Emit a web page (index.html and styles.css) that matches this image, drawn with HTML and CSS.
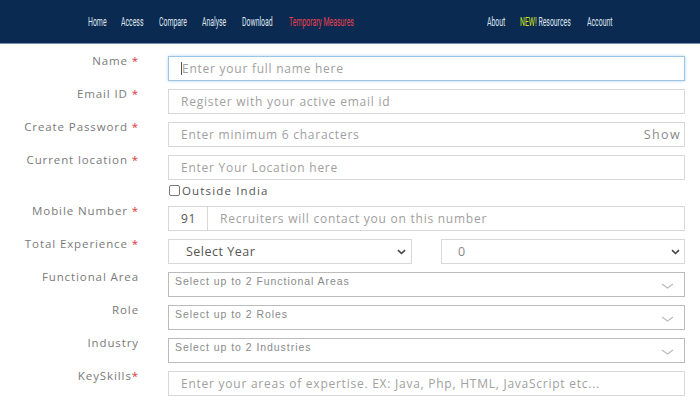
FILE: index.html
```html
<!DOCTYPE html>
<html>
<head>
<meta charset="utf-8">
<link rel="stylesheet" href="styles.css">
</head>
<body>
<header class="topbar">
  <nav class="nav">
    <a class="w-home">Home</a><a class="w-access">Access</a><a class="w-compare">Compare</a><a class="w-analyse">Analyse</a><a class="w-download">Download</a><a class="hot w-temp">Temporary Measures</a><a class="w-about">About</a><a class="w-res"><span class="new">NEW!</span> Resources</a><a>Account</a>
  </nav>
</header>
<main class="form">
  <div class="row">
    <label class="lbl">Name <span class="req">*</span></label>
    <div class="field focus"><span class="caret"></span><span class="ph">Enter your full name here</span></div>
  </div>
  <div class="row">
    <label class="lbl">Email ID <span class="req">*</span></label>
    <div class="field"><span class="ph">Register with your active email id</span></div>
  </div>
  <div class="row">
    <label class="lbl">Create Password <span class="req">*</span></label>
    <div class="field"><span class="ph">Enter minimum 6 characters</span><span class="show">Show</span></div>
  </div>
  <div class="row">
    <label class="lbl">Current location <span class="req">*</span></label>
    <div class="field"><span class="ph">Enter Your Location here</span></div>
  </div>
  <div class="row check-row">
    <span></span>
    <div class="check"><span class="box"></span>Outside India</div>
  </div>
  <div class="row">
    <label class="lbl">Mobile Number <span class="req">*</span></label>
    <div class="mobile"><span class="code">91</span><div class="field grow"><span class="ph">Recruiters will contact you on this number</span></div></div>
  </div>
  <div class="row">
    <label class="lbl">Total Experience <span class="req">*</span></label>
    <div class="exp">
      <div class="field sel year"><span class="val">Select Year</span><svg class="chev" width="9" height="6" viewBox="0 0 9 6"><path d="M1 1.2 L4.5 4.5 L8 1.2" fill="none" stroke="#444" stroke-width="1.6"/></svg></div>
      <div class="field sel month"><span class="val light">0</span><svg class="chev" width="9" height="6" viewBox="0 0 9 6"><path d="M1 1.2 L4.5 4.5 L8 1.2" fill="none" stroke="#444" stroke-width="1.6"/></svg></div>
    </div>
  </div>
  <div class="row">
    <label class="lbl">Functional Area</label>
    <div class="field multi"><span class="mph">Select up to 2 Functional Areas</span><svg class="mchev" width="13" height="6" viewBox="0 0 13 6"><path d="M1 1 L6.5 5 L12 1" fill="none" stroke="#bbb" stroke-width="1.2"/></svg></div>
  </div>
  <div class="row">
    <label class="lbl">Role</label>
    <div class="field multi"><span class="mph">Select up to 2 Roles</span><svg class="mchev" width="13" height="6" viewBox="0 0 13 6"><path d="M1 1 L6.5 5 L12 1" fill="none" stroke="#bbb" stroke-width="1.2"/></svg></div>
  </div>
  <div class="row">
    <label class="lbl">Industry</label>
    <div class="field multi"><span class="mph">Select up to 2 Industries</span><svg class="mchev" width="13" height="6" viewBox="0 0 13 6"><path d="M1 1 L6.5 5 L12 1" fill="none" stroke="#bbb" stroke-width="1.2"/></svg></div>
  </div>
  <div class="row">
    <label class="lbl">KeySkills<span class="req">*</span></label>
    <div class="field"><span class="ph">Enter your areas of expertise. EX: Java, Php, HTML, JavaScript etc...</span></div>
  </div>
</main>
</body>
</html>
```

FILE: styles.css
```css
* { box-sizing: border-box; }
html, body { margin: 0; padding: 0; background: #fff; }
body { font-family: "Open Sans", "DejaVu Sans", sans-serif; width: 700px; height: 400px; overflow: hidden; }

.topbar {
  height: 44px;
  background: #0b2a52;
  border-bottom: 1px solid #7590ad;
  display: flex;
  align-items: center;
  padding: 0 0 1px 88px;
}
.nav { display: flex; }
.nav a {
  display: block;
  font-family: "Roboto", "Liberation Sans", sans-serif;
  font-size: 13px;
  color: #dfe4ec;
  white-space: nowrap;
  transform: scaleX(0.53);
  transform-origin: left center;
}
.nav a.hot { color: #e5414d; }
.nav .new { color: #d6e31c; }
.w-home { width: 33px; }
.w-access { width: 38px; }
.w-compare { width: 43px; }
.w-analyse { width: 40px; }
.w-download { width: 47px; }
.w-temp { width: 198px; }
.w-about { width: 33px; }
.w-res { width: 67px; }

.form { padding-top: 12px; }
.row {
  display: grid;
  grid-template-columns: 138px 517px;
  column-gap: 30px;
  margin-bottom: 8px;
}
.lbl {
  text-align: right;
  font-size: 11.5px;
  letter-spacing: 0.9px;
  line-height: 14px;
  color: #7a7a7a;
  margin-top: -2px;
  margin-right: -1px;
  white-space: nowrap;
}
.req { color: #d9363e; }

.field {
  height: 25px;
  border: 1px solid #d8d8d8;
  display: flex;
  align-items: center;
  padding: 0 12px;
  font-size: 12px;
  letter-spacing: 0.75px;
  color: #a0a0a0;
  background: #fff;
  position: relative;
}
.field.focus {
  border-color: #9cc4e4;
  box-shadow: 0 0 3px rgba(102,175,233,0.5);
}
.caret { width: 1px; height: 13px; background: #555; }
.ph { white-space: nowrap; }
.show { margin-left: auto; margin-right: -9px; color: #8a8a8a; font-size: 12.5px; letter-spacing: 1.4px; }

.check-row { margin-top: -6px; margin-bottom: 8px; }
.check {
  display: flex; align-items: center;
  font-size: 11.5px; letter-spacing: 1.15px; color: #555; height: 16px;
}
.check .box {
  width: 11px; height: 11px; border: 1px solid #777; border-radius: 2px; margin: 0 2px 0 1px;
}

.mobile { display: flex; }
.code {
  width: 39px; height: 25px; border: 1px solid #d8d8d8; border-right: none;
  display: flex; align-items: center; padding-left: 12px;
  font-size: 12px; letter-spacing: 0.75px; color: #555;
}
.grow { flex: 1; }

.exp { display: flex; justify-content: space-between; }
.sel { width: 244px; padding: 0 5px 0 17px; }
.sel .val { color: #555; font-size: 12.5px; letter-spacing: 0.5px; }
.sel .val.light { color: #888; }
.sel .chev { margin-left: auto; }
.month { padding-left: 16px; padding-right: 4px; }

.multi {
  border-color: #bbbbbb;
  align-items: flex-start;
  padding: 2px 10px 0 6px;
}
.mph { font-family: "Liberation Sans", Arial, sans-serif; font-size: 10.5px; letter-spacing: 0.95px; color: #8a8a8a; }
.mchev { margin-left: auto; margin-top: 8px; }
```
